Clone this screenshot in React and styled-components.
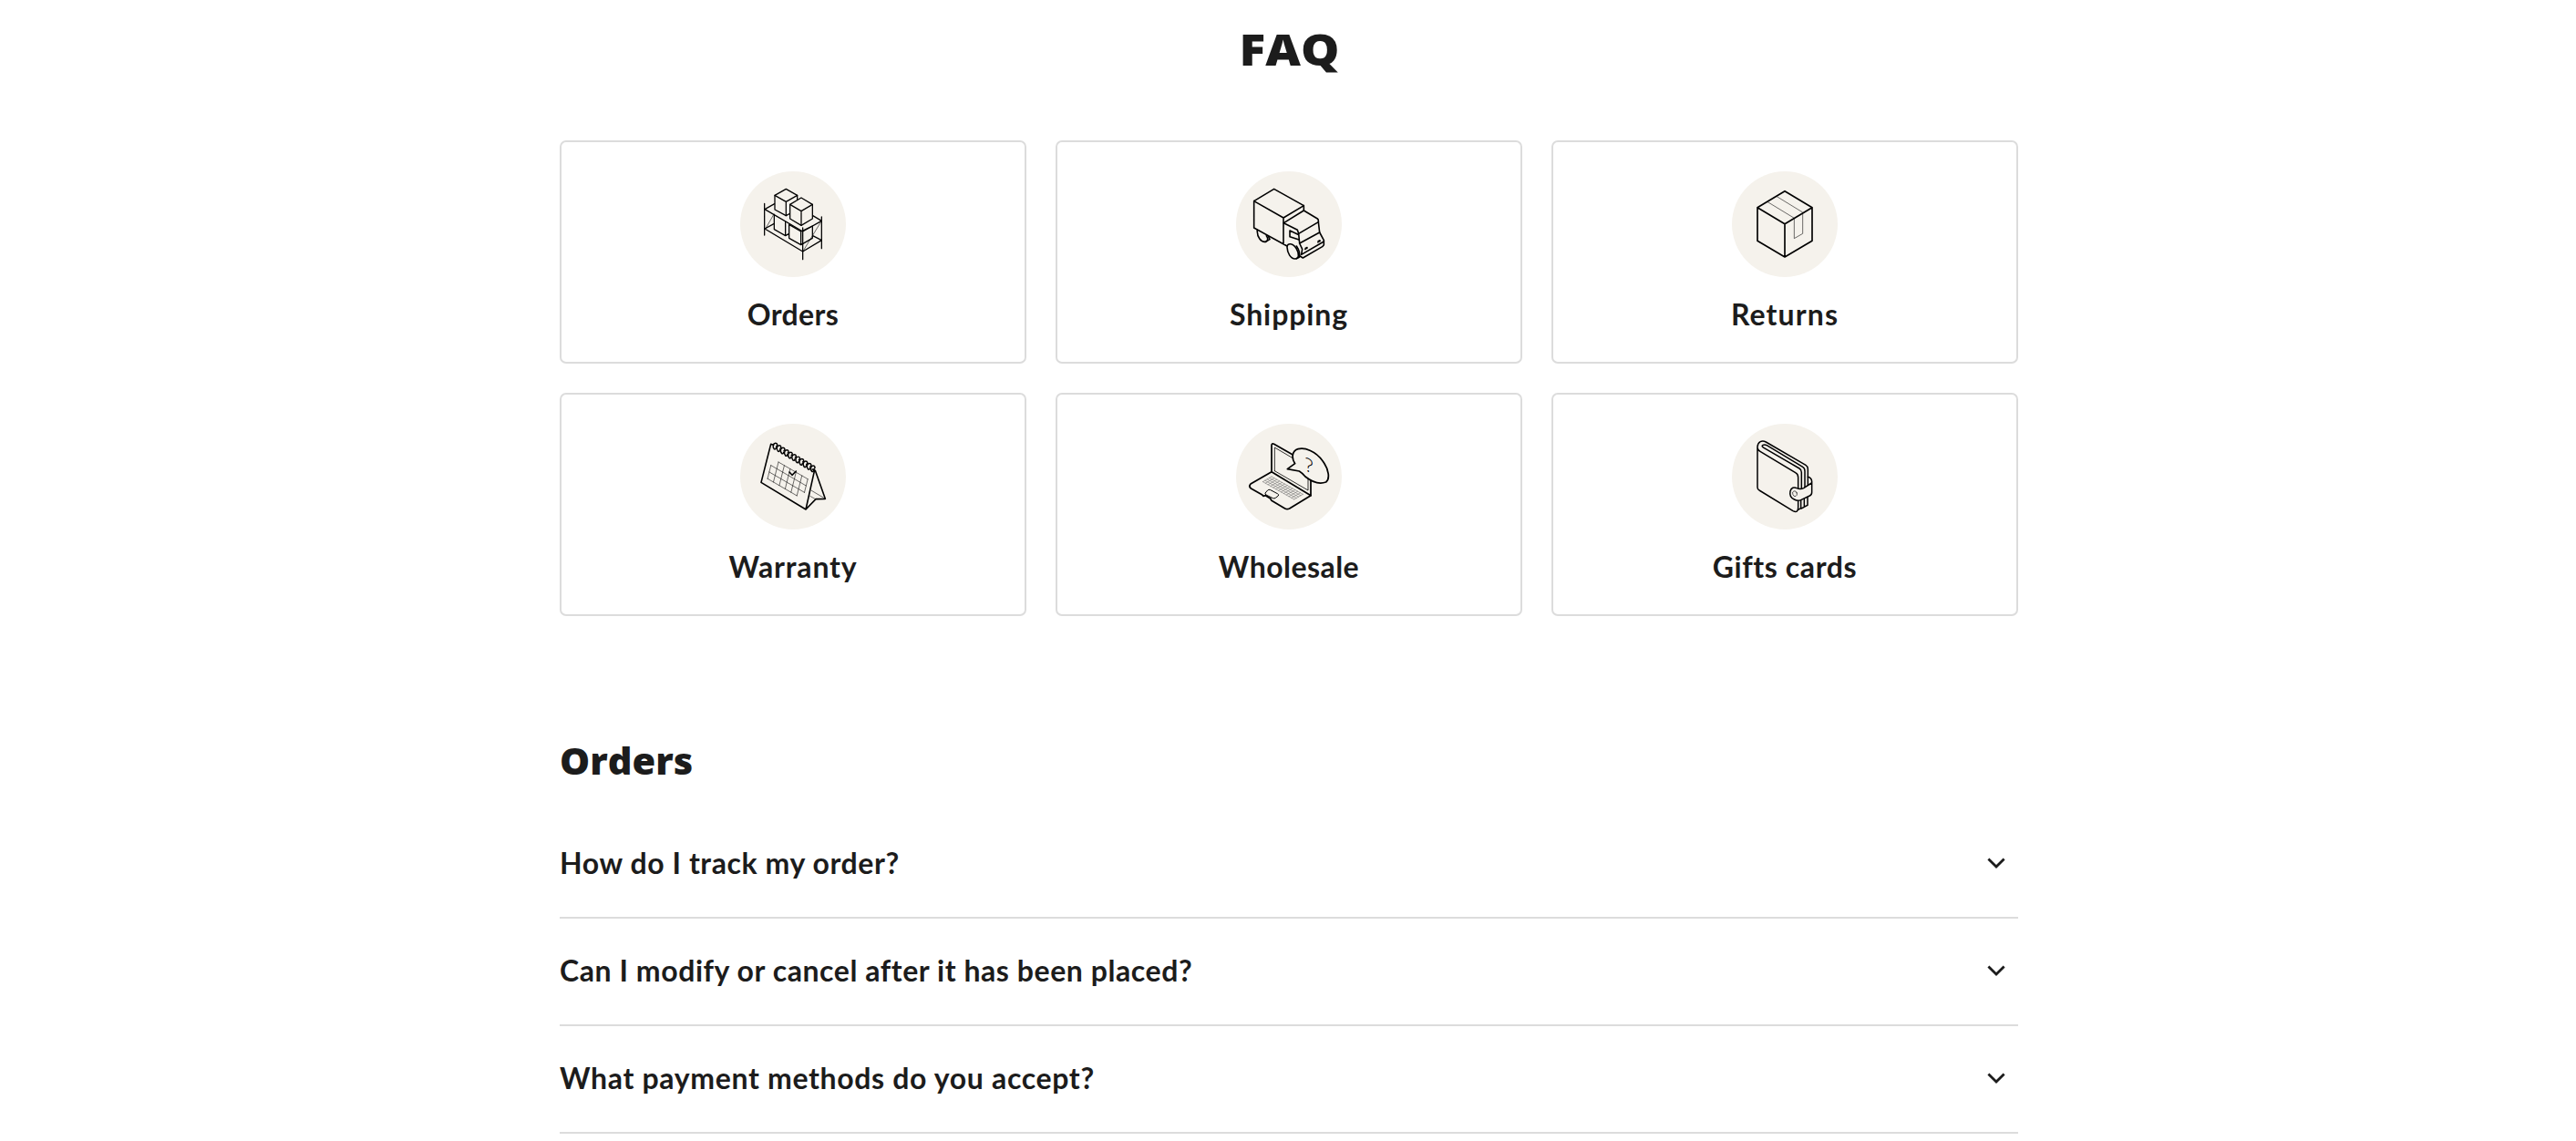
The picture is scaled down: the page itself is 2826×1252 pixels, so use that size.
import { useState } from 'react';
import styled, { createGlobalStyle } from 'styled-components';

const topics = [
    { label: 'Orders', icon: <ShelfIcon />, $tracking: 0.36 },
    { label: 'Shipping', icon: <TruckIcon />, $tracking: 0.9 },
    { label: 'Returns', icon: <BoxIcon />, $tracking: 1.1 },
    { label: 'Warranty', icon: <CalendarIcon />, $tracking: 0.8 },
    { label: 'Wholesale', icon: <LaptopIcon />, $tracking: 0.45 },
    { label: 'Gifts cards', icon: <WalletIcon />, $tracking: 0.6 },
];

const questions = [
    { text: 'How do I track my order?', $tracking: 0.58 },
    { text: 'Can I modify or cancel after it has been placed?', $tracking: 0.56 },
    { text: 'What payment methods do you accept?', $tracking: 0.66 },
];

export default function App() {
    const [selected, setSelected] = useState(null);

    return (
        <>
            <GlobalStyle />
            <Page>
                <Title><Wide $scale={1.11}>FAQ</Wide></Title>
                <Topics>
                    {topics.map(({ label, icon, $tracking }) => (
                        <TopicCard key={label}>
                            <IconCircle>{icon}</IconCircle>
                            <TopicLabel $tracking={$tracking}>{label}</TopicLabel>
                        </TopicCard>
                    ))}
                </Topics>
                <SectionTitle><Wide $scale={1.04}>Orders</Wide></SectionTitle>
                <QuestionList>
                    {questions.map(({ text, $tracking }, i) => (
                        <Question
                            key={text}
                            $tracking={$tracking}
                            aria-expanded={selected === i}
                            onClick={() => setSelected(selected === i ? null : i)}
                        >
                            {text}
                            <Chevron viewBox="0 0 20 12">
                                <path d="M1.4 1.4L10 10L18.6 1.4" />
                            </Chevron>
                        </Question>
                    ))}
                </QuestionList>
            </Page>
        </>
    );
}

function ShelfIcon() {
    return (
        <Drawing $stroke={3.8}>
            {/* lower shelf and its boxes */}
            <path d="M148 196L117 213L242 288L304 251L275 236" />
            <path d="M148 166V215L185 236V190M185 236L197 229M197 199V244L236 266L274 244V206M236 222V266M197 199L236 222L274 204" />
            {/* upper shelf */}
            <path d="M149 131L117 149L242 222L304 187L274 169" />
            <path className="fill" d="M187 82L224 103V150L187 170L150 150V103Z" />
            <path d="M150 103L187 124L224 103M187 124V170" />
            <path className="fill" d="M237 111L274 133V180L237 202L200 180V133Z" />
            <path d="M200 133L237 155L274 133M237 155V202" />
            <path d="M116 130V234M242 210V314M304 174V278" />
            <path className="thin" d="M120 212L147 165M244 285L302 190" />
        </Drawing>
    );
}

function TruckIcon() {
    return (
        <Drawing $stroke={4.8}>
            <path d="M106 217C104 240 119 258 133 256L147 248L142 237" />
            <path d="M136 236C142 244 142 252 133 256" />
            <path d="M95 122L161 82L259 137L192 177ZM95 122V210L204 270M192 177V264M259 137V153L193 194" />
            <path d="M259 153L304 180Q308 183 307 191L311 225L325 251V266L320 272L256 309L246 303" />
            <path d="M193 194L238 217L242 229L245 261L254 280L251 298M242 229L307 191M245 261L311 225M251 298L325 255" />
            <path d="M240 232L213 219V239L243 249" />
            <path className="fill" d="M204 274C204 258 224 260 235 279C245 296 243 312 230 312C216 312 205 294 204 274Z" />
            <path d="M235 270C243 282 247 298 244 307L235 311" />
            <path strokeWidth="4" d="M263 281L271 276M305 258L313 253M264 277L270 274M306 254L312 251" />
        </Drawing>
    );
}

function BoxIcon() {
    return (
        <Drawing $stroke={5}>
            <path d="M210 89L300 143L210 197L120 143ZM120 143V253L210 306L300 253V143M210 197V306" />
            <path className="thin" d="M184 107L269 159V229L241 245V178L154 125" />
        </Drawing>
    );
}

function CalendarIcon() {
    // walks a point on the tilted sheet: c cells along, r cells down
    const at = (c, r) => `${162 + c * 19.3 - r * 5.5} ${150 + c * 11.2 + r * 22}`;
    const rows = [[0, 5, 0], [-1, 5, 1], [-1, 5, 2], [-1, 4, 3]];
    const cols = [[-1, 1, 3], [0, 0, 3], [1, 0, 3], [2, 0, 3], [3, 0, 3], [4, 0, 3], [5, 0, 2]];

    return (
        <Drawing $stroke={4.8}>
            <path d="M146 94L137 91L105 217L252 306L281 176L274 174M283 178L316 271L285 272L252 306" />
            <path className="thin" d="M271 244L313 269M266 262L284 272" />
            {rows.map(([from, to, r]) => <path className="thin" key={r} d={`M${at(from, r)}L${at(to, r)}`} />)}
            {cols.map(([c, from, to]) => <path className="thin" key={c} d={`M${at(c, from)}L${at(c, to)}`} />)}
            <path d="M198 183L207 193L220 180" />
            {/* spiral binding */}
            {Array.from({ length: 11 }, (_, i) => (
                <path
                    key={i}
                    strokeWidth="4.4"
                    transform={`translate(${i * 12.4} ${i * 7.4})`}
                    d="M148 107C141 99 145 88 152 88C159 88 160 96 155 98M148 107C151 109 154 107 154 103"
                />
            ))}
        </Drawing>
    );
}

function LaptopIcon() {
    return (
        <Drawing $stroke={5.2}>
            <path d="M153 182V95Q153 87 161 91L232 131M282 205V260M153 182L282 260" />
            <path strokeWidth="2.4" d="M163 179V102L226 139M273 208V243L163 179" />
            <path d="M153 182L84 222Q77 229 84 236L121 257L126 262L133 260L149 270L153 277L197 303Q204 307 212 303L282 260" />
            <path strokeWidth="3" d="M147 241Q143 240 140 243L132 252Q131 255 135 258L157 269Q162 271 166 268L175 261Q178 257 174 255Z" />
            {/* keyboard */}
            {[0, 1, 2, 3, 4].map((r) => (
                <path
                    key={r}
                    className="keys"
                    d={`M${153 - r * 7.2} ${198 + r * 4.2}L${256 - r * 7.2} ${256 + r * 4.2}`}
                />
            ))}
            {Array.from({ length: 13 }, (_, i) => (
                <path
                    key={i}
                    className="keys"
                    d={`M${153 + i * 8.6} ${198 + i * 4.83}l-28.8 16.8`}
                />
            ))}
            <path className="fill" d="M205 173L230 155C217 136 221 112 240 107C263 101 298 114 321 146C343 176 345 206 332 216C313 223 289 218 264 198C257 190 251 184 244 180Z" />
            <Mark transform="translate(263 177) skewY(26)">?</Mark>
        </Drawing>
    );
}

function WalletIcon() {
    return (
        <Drawing $stroke={4.5}>
            {/* pages behind the cover */}
            <path d="M254 307L263 302V276M264 303L274 298V272M275 297L285 292V266" />
            <path d="M120 103V233Q120 239 126 243L237 311Q254 319 254 300V200Q254 190 245 185L129 115Q119 109 120 100C121 83 135 77 148 84L279 160Q286 164 286 173V236" />
            <path d="M265 238V184Q265 175 258 171L141 103Q132 98 138 94Q144 91 151 95L269 166Q276 170 276 180V236" />
            <path className="fill" d="M286 199Q298 202 299 214V250Q299 258 292 261L263 275Q253 280 241 273C229 268 226 256 228 246C231 234 240 231 250 236Q261 241 272 236L298 219" />
            <ellipse className="thin" cx="243" cy="254" rx="7" ry="9" transform="rotate(-20 243 254)" />
        </Drawing>
    );
}

const GlobalStyle = createGlobalStyle`
    * {
        box-sizing: border-box;
    }

    body {
        margin: 0;
        background: #fff;
        color: #1c1c1c;
        font-family: Lato, sans-serif;
    }
`;

const Page = styled.main`
    width: 1600px;
    margin-left: 614px;
    display: flex;
    flex-direction: column;
`;

const Title = styled.h1`
    margin: 0;
    height: 154px;
    padding-top: 25px;
    text-align: center;
    font-family: 'Open Sans', sans-serif;
    font-size: 48px;
    font-weight: 800;
    line-height: 58px;
`;

const SectionTitle = styled.h2`
    margin: 134px 0 0;
    height: 80px;
    font-family: 'Open Sans', sans-serif;
    font-size: 40px;
    font-weight: 800;
    line-height: 50px;
`;

// stretched to the proportions of a wide display face
const Wide = styled.span`
    display: inline-block;
    transform: scaleX(${(props) => props.$scale});

    ${SectionTitle} & {
        transform-origin: left;
    }
`;

const Topics = styled.div`
    display: grid;
    grid-template-columns: repeat(3, 1fr);
    gap: 32px;
`;

const TopicCard = styled.div`
    display: flex;
    flex-direction: column;
    align-items: center;
    height: 245px;
    padding-top: 32px;
    border: 2px solid #dcdcdc;
    border-radius: 7px;
`;

const IconCircle = styled.div`
    width: 116px;
    height: 116px;
    border-radius: 50%;
    background: #f5f2ec;
`;

const TopicLabel = styled.span`
    margin-top: 21px;
    font-size: 32px;
    font-weight: 700;
    line-height: 40px;
    letter-spacing: ${(props) => props.$tracking}px;
`;

const Drawing = styled.svg.attrs({ viewBox: '36 24 348 348' })`
    display: block;
    width: 116px;
    height: 116px;
    fill: none;
    stroke: #000;
    stroke-width: ${(props) => props.$stroke};
    stroke-linecap: round;
    stroke-linejoin: round;

    .fill {
        fill: #f5f2ec;
    }

    .thin {
        stroke-width: 1.7;
    }

    .keys {
        stroke-width: 1.6;
        stroke: #666;
    }
`;

const Mark = styled.text`
    fill: #000;
    stroke: none;
    font-family: 'Open Sans', sans-serif;
    font-size: 62px;
    font-weight: 300;
`;

const QuestionList = styled.div`
    display: flex;
    flex-direction: column;
`;

const Question = styled.button`
    display: flex;
    align-items: center;
    justify-content: space-between;
    height: 118px;
    padding: 0 14px 2px 0;
    border: 0;
    border-bottom: 2px solid #dcdcdc;
    background: none;
    color: inherit;
    font: 700 32px/40px Lato, sans-serif;
    letter-spacing: ${(props) => props.$tracking}px;
    text-align: left;
    cursor: pointer;
`;

const Chevron = styled.svg`
    width: 20px;
    height: 12px;
    fill: none;
    stroke: #1c1c1c;
    stroke-width: 2.8;
`;
